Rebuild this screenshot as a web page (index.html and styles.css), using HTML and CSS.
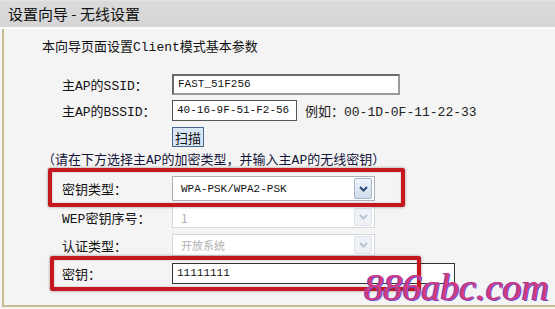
FILE: index.html
```html
<!DOCTYPE html>
<html lang="zh-CN">
<head>
    <meta charset="UTF-8">
    <meta name="viewport" content="width=device-width, initial-scale=1.0">
    <title>设置向导 - 无线设置</title>
    <link rel="stylesheet" href="styles.css">
</head>
<body>
    <div class="title-bar">设置向导 - 无线设置</div>

    <div class="panel">
        <p class="intro">本向导页面设置Client模式基本参数</p>

        <div class="row row-ssid">
            <span class="label">主AP的SSID：</span>
            <input class="text-input ssid" type="text" value="FAST_51F256">
        </div>
        <div class="row row-bssid">
            <span class="label">主AP的BSSID：</span>
            <input class="text-input bssid" type="text" value="40-16-9F-51-F2-56">
            <span class="example">例如：00-1D-0F-11-22-33</span>
        </div>
        <div class="row row-scan">
            <span class="label"></span>
            <button class="scan-btn">扫描</button>
        </div>

        <p class="hint">（请在下方选择主AP的加密类型，并输入主AP的无线密钥）</p>

        <div class="row row-keytype">
            <span class="label">密钥类型：</span>
            <div class="select">
                <span class="select-value">WPA-PSK/WPA2-PSK</span>
                <span class="select-btn"><svg width="9" height="6" viewBox="0 0 9 6"><path d="M1 1 L4.5 4.5 L8 1" fill="none" stroke="#2b4a7a" stroke-width="2"/></svg></span>
            </div>
        </div>
        <div class="row row-wep">
            <span class="label">WEP密钥序号：</span>
            <div class="select disabled">
                <span class="select-value">1</span>
                <span class="select-btn"><svg width="9" height="6" viewBox="0 0 9 6"><path d="M1 1 L4.5 4.5 L8 1" fill="none" stroke="#b8c4d4" stroke-width="2"/></svg></span>
            </div>
        </div>
        <div class="row row-auth">
            <span class="label">认证类型：</span>
            <div class="select disabled">
                <span class="select-value">开放系统</span>
                <span class="select-btn"><svg width="9" height="6" viewBox="0 0 9 6"><path d="M1 1 L4.5 4.5 L8 1" fill="none" stroke="#b8c4d4" stroke-width="2"/></svg></span>
            </div>
        </div>
        <div class="row row-key">
            <span class="label">密钥：</span>
            <input class="text-input key" type="text" value="11111111">
        </div>

        <div class="mark mark-keytype"></div>
        <div class="mark mark-key"></div>
        <div class="watermark">886abc.com</div>
    </div>
</body>
</html>
```

FILE: styles.css
```css
body {
    margin: 0;
    padding: 0;
    background-color: #f4f4f4;
    color: #111;
    font-family: "Liberation Mono", "Noto Sans CJK SC", monospace;
    font-size: 13px;
}
.title-bar {
    height: 27px;
    line-height: 27px;
    padding-left: 8px;
    background: linear-gradient(#e6e6e6 0, #dadada 2px, #d6d6d6 100%);
    border-bottom: 2px solid #fbfbfb;
    font-family: "Noto Sans CJK SC", sans-serif;
    font-size: 15px;
    color: #111;
}
.panel {
    position: relative;
    height: 276px;
    margin-left: 2px;
    padding-left: 38px;
    border-left: 2px solid #c9bb92;
    border-bottom: 2px solid #c9bb92;
}
.intro {
    margin: 0;
    padding-top: 9px;
    height: 20px;
    line-height: 20px;
}
.hint {
    margin: 4px 0 0;
    height: 20px;
    line-height: 20px;
    color: #14143a;
}
.row {
    display: flex;
    align-items: center;
    padding-left: 20px;
}
.label {
    width: 110px;
    flex-shrink: 0;
    color: #111;
}
.row-ssid { height: 22px; margin-top: 15px; }
.row-bssid { height: 22px; margin-top: 4px; }
.row-scan { height: 21px; margin-top: 5px; }
.row-keytype { height: 25px; margin-top: 5px; }
.row-wep { height: 22px; margin-top: 5px; }
.row-auth { height: 22px; margin-top: 6px; }
.row-key { height: 22px; margin-top: 6px; }
.text-input {
    box-sizing: border-box;
    height: 21px;
    padding: 0 4px;
    background: #fff;
    font-family: "Liberation Mono", monospace;
    font-size: 11px;
    color: #111;
    outline: none;
}
.ssid {
    width: 228px;
    border: 2px solid #6a6a6a;
    border-right-color: #9a9a9a;
    border-bottom-color: #9a9a9a;
}
.bssid {
    width: 125px;
    border: 1px solid #555;
}
.key {
    width: 283px;
    border: 1px solid #333;
}
.example {
    margin-left: 8px;
    color: #222;
}
.scan-btn {
    height: 20px;
    width: 32px;
    padding: 0;
    background-color: #d9e6f3;
    border: 1px solid #46678e;
    font-family: "Noto Sans CJK SC", sans-serif;
    font-size: 13px;
    color: #111;
}
.select {
    box-sizing: border-box;
    display: flex;
    align-items: center;
    width: 203px;
    height: 100%;
    padding: 2px;
    background: #fff;
    border: 1px solid #a9b0b8;
}
.select-value {
    flex: 1;
    padding-left: 6px;
    font-family: "Liberation Mono", monospace;
    font-size: 11px;
    color: #111;
}
.select-btn {
    display: flex;
    align-items: center;
    justify-content: center;
    width: 16px;
    height: 100%;
    background: linear-gradient(#eef4fb, #cfdcec);
    border: 1px solid #a4b6cc;
    border-radius: 2px;
}
.select.disabled {
    border-color: #d6d9dc;
}
.select.disabled .select-value {
    color: #b0b0b0;
    font-family: "Noto Sans CJK SC", "Liberation Mono", sans-serif;
}
.select.disabled .select-btn {
    background: #eef2f7;
    border-color: #dde4ec;
}
.row-wep .select-value { font-family: "Liberation Serif", serif; font-size: 12px; }
.mark {
    position: absolute;
    border: 4px solid #c5171f;
    border-radius: 2px;
    box-shadow: 0 0 3px rgba(60, 0, 0, 0.45), inset 0 0 2px rgba(60, 0, 0, 0.3);
}
.mark-keytype {
    left: 44px;
    top: 139px;
    width: 349px;
    height: 31px;
}
.mark-key {
    left: 46px;
    top: 227px;
    width: 363px;
    height: 27px;
}
.watermark {
    position: absolute;
    right: 6px;
    bottom: -4px;
    font-family: "Liberation Serif", serif;
    font-style: italic;
    font-size: 38px;
    color: #d33a78;
    text-shadow: 1px 1px 0 #6b4bd4, -1px 0 0 #8a4ad0;
}
```
